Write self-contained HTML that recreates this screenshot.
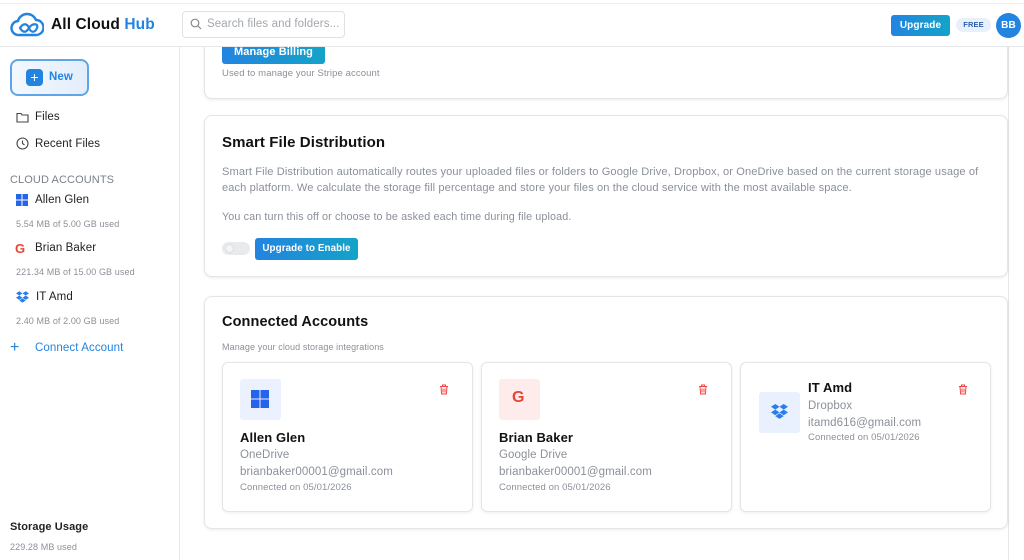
<!DOCTYPE html>
<html><head><meta charset="utf-8"><style>
*{box-sizing:border-box;margin:0;padding:0}
body{width:1024px;height:560px;overflow:hidden;background:#fff;font-family:"Liberation Sans",sans-serif;color:#111;position:relative;letter-spacing:.1px}
.abs{position:absolute}
.hdr{left:0;top:3px;width:1024px;height:44px;border-top:1px solid #eceef1;border-bottom:1px solid #e5e7eb;background:#fff}
.side{left:0;top:47px;width:180px;height:513px;border-right:1px solid #e5e7eb}
.card{position:absolute;background:#fff;border:1px solid #e3e5e8;border-radius:8px;box-shadow:0 1px 3px rgba(0,0,0,.08)}
.btn{position:absolute;background:linear-gradient(90deg,#2384e0,#14a3c7);color:#fff;font-weight:bold;font-size:11px;border-radius:3px;text-align:center}
.gray{color:#8b9099}
.nav{position:absolute;left:17px;font-size:11.5px;color:#222}
.acc{position:absolute;width:251px;height:150px;border:1px solid #e3e5e8;border-radius:6px;box-shadow:0 1px 3px rgba(0,0,0,.07);background:#fff}
.ic{position:absolute;width:41px;height:41px;border-radius:3px}
.nm{position:absolute;font-weight:bold;font-size:13px}
.sm{position:absolute;font-size:11.5px;color:#8b9099}
.xs{position:absolute;font-size:9.5px;color:#8b9099}
</style></head><body>

<div class="abs side"></div>
<div class="abs" style="left:10px;top:59px;width:79px;height:37px;border:2px solid #5fa5e8;border-radius:8px;background:linear-gradient(90deg,#f3f8fe,#e3eefb)"></div>
<div class="abs" style="left:26px;top:69px;width:17px;height:17px;border-radius:4px;background:#2384e0;color:#fff;font-size:14px;line-height:16px;text-align:center">+</div>
<div class="abs" style="left:49px;top:71px;font-size:11.5px;font-weight:bold;color:#2384e0">New</div>
<svg class="abs" style="left:16px;top:112px" width="13" height="11" viewBox="0 0 13 11"><path d="M1 1.5h4l1 1.5h6v7H1z" fill="none" stroke="#444" stroke-width="1.1"/></svg>
<div class="nav" style="left:35px;top:111px">Files</div>
<svg class="abs" style="left:16px;top:137px" width="13" height="13" viewBox="0 0 13 13"><circle cx="6.5" cy="6.5" r="5.5" fill="none" stroke="#444" stroke-width="1.1"/><path d="M6.5 3.5v3l2 1.5" fill="none" stroke="#444" stroke-width="1.1"/></svg>
<div class="nav" style="left:35px;top:138px">Recent Files</div>
<div class="abs" style="left:10px;top:174px;font-size:11px;color:#7b8089">CLOUD ACCOUNTS</div>
<svg class="abs" style="left:16px;top:194px" width="12" height="12"><rect x="0" y="0" width="5.5" height="5.5" fill="#2563eb"/><rect x="6.5" y="0" width="5.5" height="5.5" fill="#2563eb"/><rect x="0" y="6.5" width="5.5" height="5.5" fill="#2563eb"/><rect x="6.5" y="6.5" width="5.5" height="5.5" fill="#2563eb"/></svg>
<div class="nav" style="left:35px;top:194px">Allen Glen</div>
<div class="abs gray" style="left:16px;top:219px;font-size:9px">5.54 MB of 5.00 GB used</div>
<div class="abs" style="left:15px;top:241px;font-size:13px;font-weight:bold;color:#ea4335">G</div>
<div class="nav" style="left:35px;top:242px">Brian Baker</div>
<div class="abs gray" style="left:16px;top:267px;font-size:9px">221.34 MB of 15.00 GB used</div>
<svg class="abs" style="left:16px;top:291px" width="13" height="12" viewBox="0 0 17 15"><path d="M4.3 0L0 2.8l4.3 2.8 4.2-2.8zM12.7 0L8.5 2.8l4.2 2.8L17 2.8zM0 8.4l4.3 2.8 4.2-2.8-4.2-2.8zM12.7 5.6L8.5 8.4l4.2 2.8L17 8.4zM4.3 12.1l4.2 2.8 4.2-2.8-4.2-2.8z" fill="#2b7de9"/></svg>
<div class="nav" style="left:36px;top:291px">IT Amd</div>
<div class="abs gray" style="left:16px;top:316px;font-size:9px">2.40 MB of 2.00 GB used</div>
<div class="abs" style="left:10px;top:339px;font-size:16px;color:#2384e0">+</div>
<div class="abs" style="left:35px;top:342px;font-size:11.5px;color:#2384e0">Connect Account</div>
<div class="abs" style="left:10px;top:521px;font-size:11px;font-weight:bold;color:#222">Storage Usage</div>
<div class="abs gray" style="left:10px;top:542px;font-size:9px">229.28 MB used</div>
<div class="abs" style="left:1008px;top:47px;width:1px;height:513px;background:#e5e7eb"></div>

<div class="card" style="left:204px;top:20px;width:804px;height:79px"></div>
<div class="btn" style="left:222px;top:40px;width:103px;height:24px;line-height:24px;border-radius:0 0 3px 3px">Manage Billing</div>
<div class="abs gray" style="left:222px;top:68px;font-size:9.5px">Used to manage your Stripe account</div>

<div class="card" style="left:204px;top:115px;width:804px;height:162px"></div>
<div class="abs" style="left:222px;top:134px;font-size:15px;font-weight:bold">Smart File Distribution</div>
<div class="abs gray" style="left:222px;top:164px;width:775px;font-size:11.1px;line-height:16px">Smart File Distribution automatically routes your uploaded files or folders to Google Drive, Dropbox, or OneDrive based on the current storage usage of each platform. We calculate the storage fill percentage and store your files on the cloud service with the most available space.</div>
<div class="abs gray" style="left:222px;top:211px;font-size:10.8px">You can turn this off or choose to be asked each time during file upload.</div>
<div class="abs" style="left:222px;top:242px;width:28px;height:13px;border-radius:7px;background:#e9eaec"></div>
<div class="abs" style="left:225px;top:244px;width:9px;height:9px;border-radius:50%;background:#f4f4f5;border:1px solid #ddd"></div>
<div class="btn" style="left:255px;top:238px;width:103px;height:22px;line-height:22px;font-size:9.8px">Upgrade to Enable</div>

<div class="card" style="left:204px;top:296px;width:804px;height:233px"></div>
<div class="abs" style="left:222px;top:314px;font-size:14.5px;font-weight:bold">Connected Accounts</div>
<div class="abs gray" style="left:222px;top:342px;font-size:9px">Manage your cloud storage integrations</div>

<div class="acc" style="left:222px;top:362px"></div>
<div class="ic" style="left:240px;top:379px;background:#ebf1fe"></div>
<svg class="abs" style="left:251px;top:390px" width="18" height="18"><rect x="0" y="0" width="8.5" height="8.5" fill="#2563eb"/><rect x="9.5" y="0" width="8.5" height="8.5" fill="#2563eb"/><rect x="0" y="9.5" width="8.5" height="8.5" fill="#2563eb"/><rect x="9.5" y="9.5" width="8.5" height="8.5" fill="#2563eb"/></svg>
<div class="nm" style="left:240px;top:430px">Allen Glen</div>
<div class="sm" style="left:240px;top:449px">OneDrive</div>
<div class="sm" style="left:240px;top:466px">brianbaker00001@gmail.com</div>
<div class="xs" style="left:240px;top:482px">Connected on 05/01/2026</div>

<div class="acc" style="left:481px;top:362px"></div>
<div class="ic" style="left:499px;top:379px;background:#fdeceb"></div>
<div class="abs" style="left:512px;top:389px;font-size:16px;font-weight:bold;color:#ea4335">G</div>
<div class="nm" style="left:499px;top:430px">Brian Baker</div>
<div class="sm" style="left:499px;top:449px">Google Drive</div>
<div class="sm" style="left:499px;top:466px">brianbaker00001@gmail.com</div>
<div class="xs" style="left:499px;top:482px">Connected on 05/01/2026</div>

<div class="acc" style="left:740px;top:362px"></div>
<div class="ic" style="left:759px;top:392px;background:#e8f1fd"></div>
<svg class="abs" style="left:771px;top:404px" width="17" height="15" viewBox="0 0 17 15"><path d="M4.3 0L0 2.8l4.3 2.8 4.2-2.8zM12.7 0L8.5 2.8l4.2 2.8L17 2.8zM0 8.4l4.3 2.8 4.2-2.8-4.2-2.8zM12.7 5.6L8.5 8.4l4.2 2.8L17 8.4zM4.3 12.1l4.2 2.8 4.2-2.8-4.2-2.8z" fill="#2b7de9"/></svg>
<div class="nm" style="left:808px;top:380px">IT Amd</div>
<div class="sm" style="left:808px;top:400px">Dropbox</div>
<div class="sm" style="left:808px;top:417px">itamd616@gmail.com</div>
<div class="xs" style="left:808px;top:432px">Connected on 05/01/2026</div>

<svg class="abs" style="left:439px;top:384px" width="10" height="11" viewBox="0 0 10 11"><path d="M1 2.5h8M3.5 2.5V1h3v1.5M2 2.5l.6 7.5h4.8L8 2.5M4 4.5v4M6 4.5v4" fill="none" stroke="#ef4444" stroke-width="1"/></svg>
<svg class="abs" style="left:698px;top:384px" width="10" height="11" viewBox="0 0 10 11"><path d="M1 2.5h8M3.5 2.5V1h3v1.5M2 2.5l.6 7.5h4.8L8 2.5M4 4.5v4M6 4.5v4" fill="none" stroke="#ef4444" stroke-width="1"/></svg>
<svg class="abs" style="left:958px;top:384px" width="10" height="11" viewBox="0 0 10 11"><path d="M1 2.5h8M3.5 2.5V1h3v1.5M2 2.5l.6 7.5h4.8L8 2.5M4 4.5v4M6 4.5v4" fill="none" stroke="#ef4444" stroke-width="1"/></svg>

<div class="abs" style="left:0;top:0;width:1024px;height:3px;background:#fff"></div>
<div class="abs hdr"></div>
<svg class="abs" style="left:10px;top:12px" width="34" height="26" viewBox="0 0 34 26"><path d="M9 23a7 7 0 0 1-1-14A9.5 9.5 0 0 1 26 8a7.5 7.5 0 0 1 0 15z" fill="none" stroke="#2384e0" stroke-width="2.4"/><path d="M10 16c3-5 7-5 9 0s6 5 8 0-5-5-8 0-6 5-9 0z" fill="none" stroke="#2384e0" stroke-width="2.2"/></svg>
<div class="abs" style="left:51px;top:16px;font-size:15.5px;font-weight:bold">All Cloud <span style="color:#2384e0">Hub</span></div>
<div class="abs" style="left:182px;top:11px;width:163px;height:27px;border:1px solid #dfe1e5;border-radius:4px;background:#fff"></div>
<svg class="abs" style="left:190px;top:18px" width="12" height="12" viewBox="0 0 12 12"><circle cx="5" cy="5" r="3.8" fill="none" stroke="#888" stroke-width="1.2"/><path d="M8 8l3 3" stroke="#888" stroke-width="1.2"/></svg>
<div class="abs" style="left:207px;top:18px;font-size:11.5px;color:#a3a7ad">Search files and folders...</div>
<div class="btn" style="left:891px;top:15px;width:59px;height:21px;line-height:21px;font-size:10px">Upgrade</div>
<div class="abs" style="left:956px;top:18px;width:35px;height:14px;border-radius:7px;background:#e7f0fb;color:#2b5fa8;font-size:7.5px;font-weight:bold;text-align:center;line-height:14px">FREE</div>
<div class="abs" style="left:996px;top:13px;width:25px;height:25px;border-radius:50%;background:#2384e0;color:#fff;font-size:10px;font-weight:bold;text-align:center;line-height:25px">BB</div>
</body></html>
